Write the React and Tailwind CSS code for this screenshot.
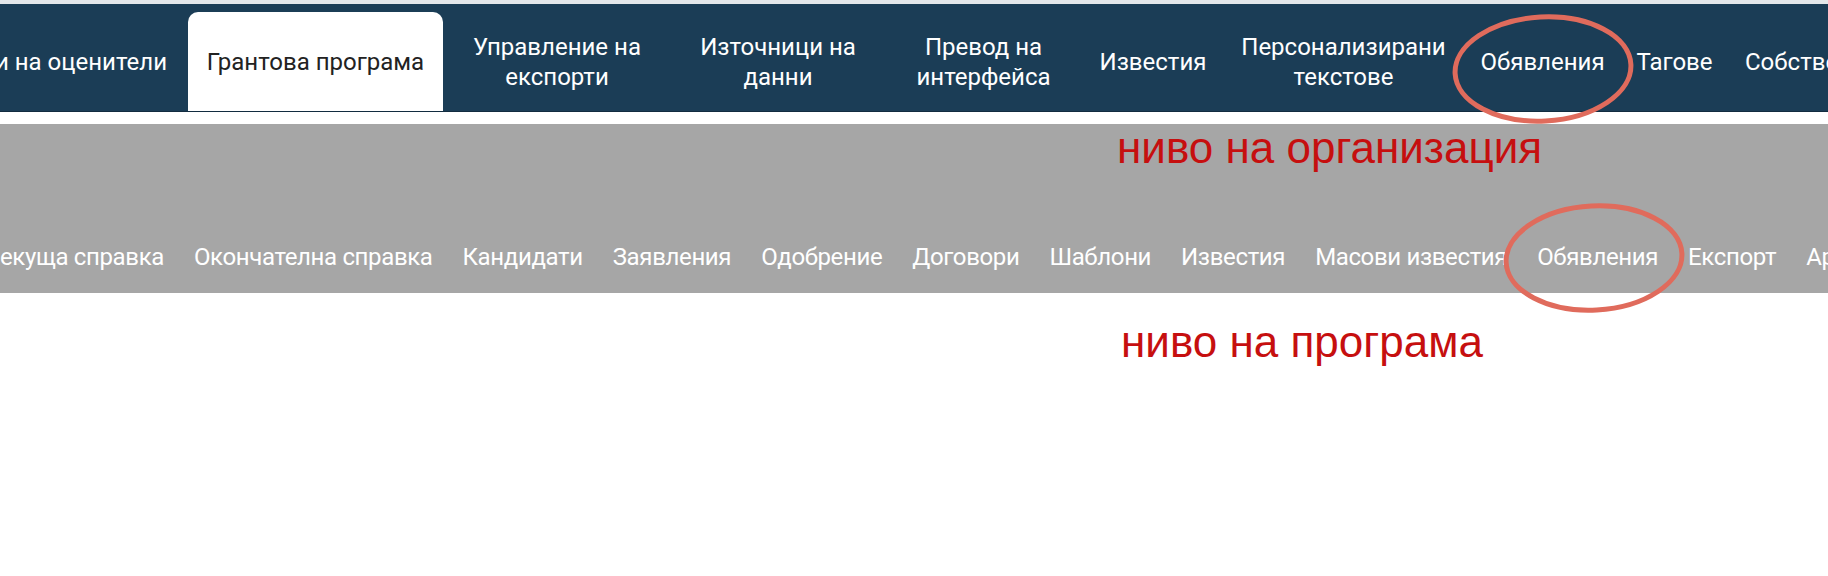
import React from "react";

const topItems = [
  { label: ["Управление на", "експорти"], w: "w-[228px]" },
  { label: ["Източници на", "данни"], w: "w-[214px]" },
  { label: ["Превод на", "интерфейса"], w: "w-[197px]" },
  { label: ["Известия"], w: "w-[142px]" },
  { label: ["Персонализирани", "текстове"], w: "w-[239px]" },
  { label: ["Обявления"], w: "w-[159px]" },
  { label: ["Тагове"], w: "w-[105px]" },
];

const subItems = [
  "Окончателна справка",
  "Кандидати",
  "Заявления",
  "Одобрение",
  "Договори",
  "Шаблони",
  "Известия",
  "Масови известия",
  "Обявления",
  "Експорт",
  "Архив",
];

// red hand-drawn ring used for the annotations
const Ring = ({ className }) => (
  <svg
    className={className}
    viewBox="0 0 186 114"
    fill="none"
    xmlns="http://www.w3.org/2000/svg"
  >
    <ellipse
      cx="93"
      cy="57"
      rx="88"
      ry="52"
      transform="rotate(-3 93 57)"
      stroke="#e06b5c"
      strokeWidth="5"
    />
  </svg>
);

const App = () => {
  return (
    <div className="relative w-[1828px] h-[576px] overflow-hidden bg-white font-['Roboto',sans-serif]">
      {/* Top strip */}
      <div className="h-1 bg-[#e3e7ea]" />

      {/* Organisation level nav */}
      <nav className="h-[108px] bg-[#1b3d56] border-b border-[#122c40] flex items-end text-white text-[24px] leading-[30px] whitespace-nowrap">
        <div className="w-[188px] h-[99px] shrink-0 flex items-center justify-end pr-[21px] overflow-hidden">
          и на оценители
        </div>
        <div className="w-[255px] h-[99px] shrink-0 flex items-center justify-center bg-white text-[#222] rounded-t-[10px]">
          Грантова програма
        </div>
        {topItems.map((item, i) => (
          <div
            key={i}
            className={`${item.w} h-[99px] shrink-0 flex items-center justify-center text-center`}
          >
            <span>
              {item.label.map((line, j) => (
                <span key={j} className="block">
                  {line}
                </span>
              ))}
            </span>
          </div>
        ))}
        <div className="h-[99px] shrink-0 flex items-center pl-[18px]">
          Собствени полета
        </div>
      </nav>

      <div className="h-3" />

      {/* Program level nav */}
      <div className="h-[169px] bg-[#a6a6a6] flex flex-col">
        <div className="pl-[1117px] pt-[2px] text-[44px] leading-none text-[#c60f0f] font-['Liberation_Sans',Arial,sans-serif]">
          ниво на организация
        </div>
        <div className="mt-auto h-[72px] flex items-center gap-[30px] text-white text-[24px] tracking-[-0.36px] whitespace-nowrap">
          <span>екуща справка</span>
          {subItems.map((s) => (
            <span key={s}>{s}</span>
          ))}
        </div>
      </div>

      <div className="pl-[1121px] mt-[27px] text-[44px] leading-none text-[#c60f0f] font-['Liberation_Sans',Arial,sans-serif]">
        ниво на програма
      </div>

      {/* annotation rings */}
      <Ring className="absolute left-[1450px] top-[12px] w-[186px] h-[114px]" />
      <Ring className="absolute left-[1501px] top-[201px] w-[186px] h-[114px]" />
    </div>
  );
};

export default App;
